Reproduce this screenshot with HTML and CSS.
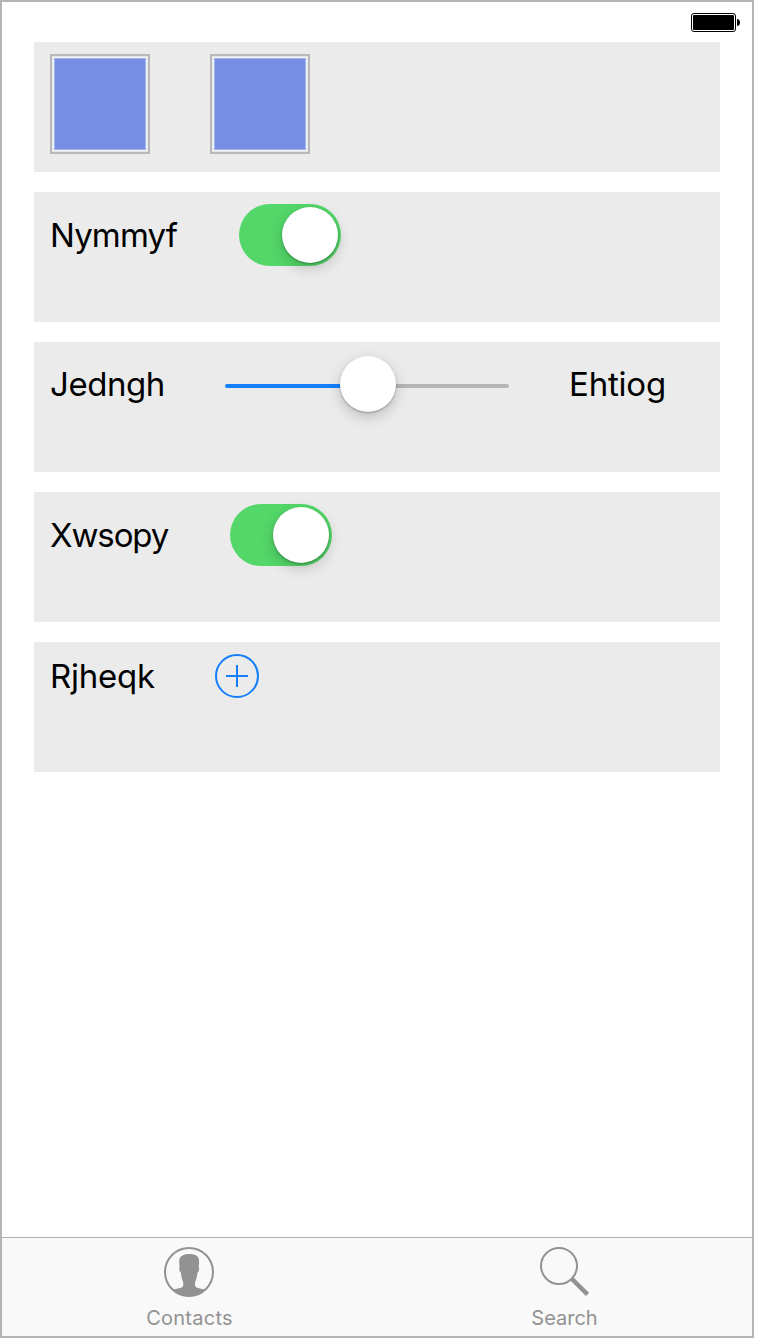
FILE: index.html
```html
<!DOCTYPE html>
<html lang="en">
<head>
<meta charset="utf-8">
<title>Controls</title>
<link rel="stylesheet" href="styles.css">
</head>
<body>
<div class="screen">
  <header class="status">
    <svg width="49" height="20" viewBox="0 0 49 20">
      <rect x=".5" y=".5" width="44" height="18" rx="2.5" fill="#fff" stroke="#000"/>
      <rect x="2" y="2" width="41" height="15" rx="1" fill="#000"/>
      <path d="M46 6c4 0 4 7 0 7z" fill="#000"/>
    </svg>
  </header>
  <main class="cards">
    <section class="card">
      <div class="swatch"></div>
      <div class="swatch"></div>
    </section>
    <section class="card">
      <span class="label nymmyf">Nymmyf</span>
      <div class="switch"><div class="thumb"></div></div>
    </section>
    <section class="card slider-card">
      <span class="label jedngh">Jedngh</span>
      <div class="slider"><div class="thumb"></div></div>
      <span class="label ehtiog">Ehtiog</span>
    </section>
    <section class="card">
      <span class="label xwsopy">Xwsopy</span>
      <div class="switch"><div class="thumb"></div></div>
    </section>
    <section class="card">
      <span class="label rjheqk">Rjheqk</span>
      <svg width="44" height="44" viewBox="0 0 44 44" fill="none" stroke="#147efb" stroke-width="2">
        <circle cx="22" cy="22" r="21"/>
        <path d="M11 22h22M22 11v22"/>
      </svg>
    </section>
  </main>
  <nav class="tabs">
    <div class="tab">
      <svg class="icon" width="50" height="50" viewBox="0 0 50 50">
        <circle cx="25" cy="25" r="24" fill="none" stroke="#929292" stroke-width="2"/>
        <path d="M9 42.500C13 41.500 18 41.500 19 39C19.500 37.500 19.300 36 19 34.500C17.800 32 17.300 29 16.800 25.500C15.300 24.500 14.800 21 15.600 20C14.500 13 15.500 9.500 19 8.300C22 6.500 28 6.500 31 8C35 9 35.800 13 34.600 20C35.700 21 35 24.500 33.600 25.500C33 29 32.500 32 31.300 34.500C31 36 30.800 37.500 31.300 39C32.300 41.500 37 41.500 41 42.500C32 51.500 18 51.500 9 42.500Z" fill="#929292"/>
      </svg>
      <span class="contacts">Contacts</span>
    </div>
    <div class="tab">
      <svg class="icon" width="50" height="50" viewBox="0 0 50 50" fill="none" stroke="#929292">
        <circle cx="20" cy="19" r="18" stroke-width="2"/>
        <path d="M33 32L48.500 47.500" stroke-width="4.500"/>
      </svg>
      <span class="search">Search</span>
    </div>
  </nav>
</div>
</body>
</html>
```
FILE: styles.css
```css
body {
  margin: 0;
  background: #fff;
  font-family: Inter, "Liberation Sans", sans-serif;
}
.screen {
  box-sizing: border-box;
  width: 754px;
  height: 1338px;
  border: 2px solid #b4b4b4;
  display: flex;
  flex-direction: column;
}
.status {
  box-sizing: border-box;
  height: 40px;
  padding: 11px 12px 0 0;
  display: flex;
  align-items: flex-start;
  justify-content: flex-end;
}
.cards {
  flex: 1;
  padding: 0 32px;
  display: flex;
  flex-direction: column;
  gap: 20px;
}
.card {
  box-sizing: border-box;
  height: 130px;
  padding: 12px 16px;
  background: #ebebeb;
  display: grid;
  grid-auto-flow: column;
  grid-auto-columns: max-content;
  grid-template-rows: max-content;
  align-items: center;
  column-gap: 60px;
}
.swatch {
  box-sizing: border-box;
  width: 100px;
  height: 100px;
  border: 2px solid #b9b9b9;
  background: #768fe2;
  box-shadow: inset 0 0 0 1px #e6e6e8, inset 0 0 0 2px #f2f3f7, inset 0 0 0 3px #a2b1e9;
}
.label {
  font-size: 33px;
  line-height: 42px;
  white-space: nowrap;
  color: #000;
}
.nymmyf { width: 129px; letter-spacing: -.85px; }
.jedngh { width: 115px; letter-spacing: -.45px; }
.ehtiog { width: 97px; letter-spacing: -.2px; }
.xwsopy { width: 120px; letter-spacing: -1.1px; }
.rjheqk { width: 105px; letter-spacing: -.25px; }
.switch {
  box-sizing: border-box;
  width: 102px;
  height: 62px;
  padding: 3px;
  border-radius: 31px;
  background: #53d769;
  display: flex;
  justify-content: flex-end;
}
.thumb {
  width: 56px;
  height: 56px;
  border-radius: 50%;
  background: #fff;
  box-shadow: 0 1px 2px rgba(0, 0, 0, .28), 0 5px 14px rgba(0, 0, 0, .2);
}
.slider-card { grid-template-rows: 60px; }
.slider {
  width: 284px;
  height: 60px;
  display: flex;
  align-items: center;
}
.slider::before,
.slider::after {
  content: "";
  height: 4px;
  margin-top: 4px;
}
.slider::before {
  flex: 0 0 115px;
  background: #147efb;
  border-radius: 2px 0 0 2px;
}
.slider::after {
  flex: 1;
  background: #b5b5b5;
  border-radius: 0 2px 2px 0;
}
.slider .thumb {
  z-index: 1;
  flex: none;
}
.tabs {
  box-sizing: border-box;
  height: 99px;
  border-top: 1px solid #adadad;
  background: #f9f9f9;
  display: grid;
  grid-template-columns: 1fr 1fr;
}
.tab {
  padding-top: 9px;
  display: flex;
  flex-direction: column;
  align-items: center;
  gap: 8px;
  color: #929292;
  font-size: 20px;
  line-height: 26px;
}
.icon { margin-right: 2px; }
.contacts { letter-spacing: .25px; }
.search { letter-spacing: 0; }
```
